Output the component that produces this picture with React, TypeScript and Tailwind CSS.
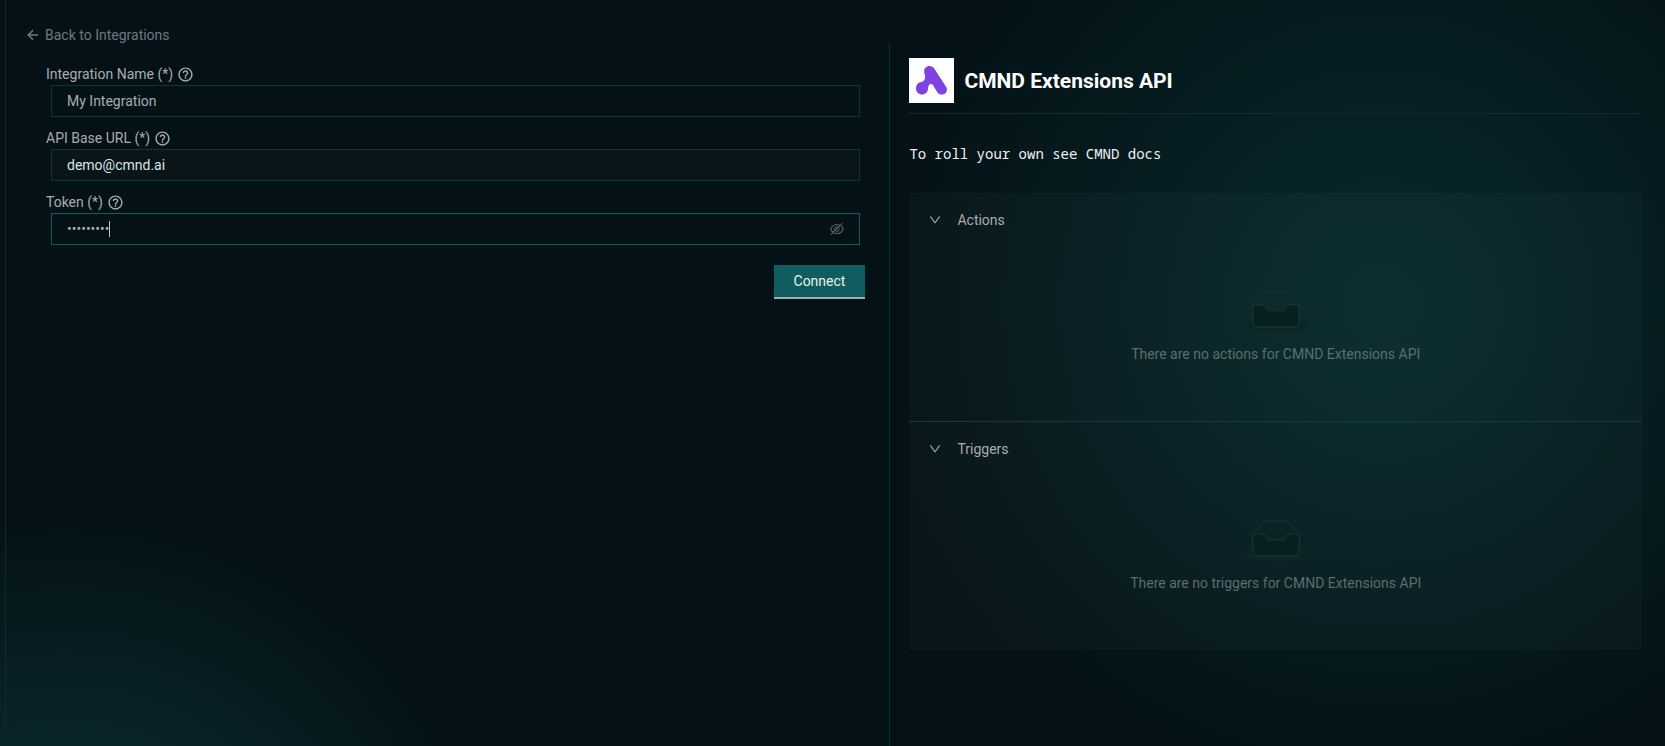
import { useState, type ReactNode } from "react";
import { AiOutlineDown, AiOutlineEyeInvisible } from "react-icons/ai";
import { MdHelpOutline } from "react-icons/md";

type FieldProps = {
  id: string;
  label: string;
  children: ReactNode;
};

const inputClass =
  "block h-8 w-full border px-[15px] text-sm outline-none caret-transparent";

function Field({ id, label, children }: FieldProps) {
  return (
    <div className="mb-[10px]">
      <div className="flex h-[22px] items-center gap-1 text-sm text-[#a9adae]">
        <label htmlFor={id}>{label}</label>
        <MdHelpOutline className="size-[17px]" />
      </div>
      <div className="relative mx-[5px]">{children}</div>
    </div>
  );
}

function BackArrow() {
  return (
    <svg viewBox="0 0 14 14" className="size-[14px]" fill="none" stroke="currentColor" strokeWidth="1.6" aria-hidden="true">
      <path d="M12 7H2.800M7 2.300L2.300 7 7 11.700" />
    </svg>
  );
}

function Logo() {
  return (
    <svg viewBox="0 0 45 45" className="size-[45px] shrink-0 bg-white" aria-hidden="true">
      <path
        d="M20.500 8c-3.300 0-5.600 2.600-5.400 5.600.1 2.100.9 3.200 1 5 .1 3.300-1.500 5.400-4.700 5.700C8.700 24.700 7 27.400 7 30.500 7 34 9.700 36.500 13 36.500c3.600 0 5.700-2.300 6-5.500.3-3.100.9-5 2.900-5 1.300 0 2 .9 2.700 2.200l3.600 5.700c1.200 1.800 2.700 2.600 4.600 2.600 4 0 6.500-4 4.400-7.600L25.400 10.700C24.200 8.900 22.600 8 20.500 8z"
        fill="#8142e3"
      />
    </svg>
  );
}

function EmptyTray() {
  return (
    <svg width="64" height="41" viewBox="0 0 64 41" aria-hidden="true">
      <g transform="translate(0 1)" fill="none" fillRule="evenodd">
        <ellipse fill="#0b2627" cx="32" cy="33" rx="32" ry="7" />
        <g fillRule="nonzero" stroke="#1f3537">
          <path d="M55 12.760L44.854 1.258C44.367.474 43.656 0 42.907 0H21.093c-.749 0-1.460.474-1.947 1.257L9 12.761V22h46v-9.240z" />
          <path
            d="M41.613 15.931c0-1.605.994-2.930 2.227-2.931H55v18.137C55 33.260 53.680 35 52.050 35h-40.100C10.320 35 9 33.259 9 31.137V13h11.160c1.233 0 2.227 1.323 2.227 2.928v.022c0 1.605 1.005 2.901 2.237 2.901h14.752c1.232 0 2.237-1.308 2.237-2.913v-.007z"
            fill="#071f20"
          />
        </g>
      </g>
    </svg>
  );
}

function Section({ title, empty }: { title: string; empty: string }) {
  const [open, setOpen] = useState(true);

  return (
    <section className="border-b border-[#113b3d] pb-14 last:border-b-0">
      <button
        type="button"
        aria-expanded={open}
        onClick={() => setOpen(!open)}
        className="flex h-[54px] w-full items-center gap-[15px] px-[19px] text-left text-sm text-[#a9adae]"
      >
        <AiOutlineDown className="size-[14px]" />
        {title}
      </button>
      {open && (
        <div className="flex flex-col items-center pt-11">
          <EmptyTray />
          <p className="mt-[11px] text-sm leading-[22px] text-[#5c6d6f]">{empty}</p>
        </div>
      )}
    </section>
  );
}

export default function App() {
  const [name, setName] = useState("My Integration");
  const [baseUrl, setBaseUrl] = useState("demo@cmnd.ai");
  const [token, setToken] = useState("cmndtoken");
  const [showToken, setShowToken] = useState(false);

  return (
    <div className="min-h-screen bg-[#041116] bg-[radial-gradient(circle_510px_at_83%_305px,#082a2c,#04111600),radial-gradient(circle_450px_at_65px_calc(100%+205px),#0e3638,#04111600)] pl-[5px] font-['Roboto',sans-serif]">
      <div className="flex min-h-screen border-l border-[#10292c]">
        <main className="min-w-0 flex-1 pt-6 pl-5">
          <a href="#integrations" className="flex h-[22px] w-fit items-center gap-[5px] text-sm text-[#6c7a7e]">
            <BackArrow />
            Back to Integrations
          </a>

          <form className="mt-[17px] mr-6 ml-5" onSubmit={(e) => e.preventDefault()}>
            <Field id="name" label="Integration Name (*)">
              <input
                id="name"
                value={name}
                onChange={(e) => setName(e.target.value)}
                className={`${inputClass} border-[#0c3639] bg-[#041217] text-[#a9adae]`}
              />
            </Field>
            <Field id="base-url" label="API Base URL (*)">
              <input
                id="base-url"
                value={baseUrl}
                onChange={(e) => setBaseUrl(e.target.value)}
                className={`${inputClass} border-[#0c3639] bg-[#0a151a] text-[#d7e6ea]`}
              />
            </Field>
            <Field id="token" label="Token (*)">
              <input
                id="token"
                type={showToken ? "text" : "password"}
                value={token}
                onChange={(e) => setToken(e.target.value)}
                className={`${inputClass} border-[#115c5d] bg-[#041116] text-[#a9adae]`}
              />
              {!showToken && (
                <span
                  className="absolute top-2 h-4 w-px bg-[#c3c7c8]"
                  style={{ left: Math.round(16 + token.length * 4.720) }}
                />
              )}
              <button
                type="button"
                aria-label="Toggle token visibility"
                onClick={() => setShowToken(!showToken)}
                className="absolute top-2 right-[15px] text-[#5b6163]"
              >
                <AiOutlineEyeInvisible className="size-4" />
              </button>
            </Field>
            <div className="mt-5 flex justify-end">
              <button
                type="submit"
                className="h-[34px] border-b-2 border-[#9eb0aa] bg-[#115c5e] px-5 text-sm text-[#e8f1f1]"
              >
                Connect
              </button>
            </div>
          </form>
        </main>

        <aside className="mt-[43px] w-[46.75%] shrink-0 border-l border-[#0d3033] pt-[15px] pr-[23px] pl-[19px]">
          <header className="flex items-center gap-[10px] border-b border-[#132b2e] pb-[10px]">
            <Logo />
            <h1 className="text-[21px] leading-7 font-bold text-white">CMND Extensions API</h1>
          </header>
          <p className="mt-[29px] font-['Noto_Sans_Mono','DejaVu_Sans_Mono',monospace] text-sm leading-[22px] text-[#eef1f1]">
            To roll your own see CMND docs
          </p>
          <div className="mt-7 bg-[#ffffff06]">
            <Section title="Actions" empty="There are no actions for CMND Extensions API" />
            <Section title="Triggers" empty="There are no triggers for CMND Extensions API" />
          </div>
        </aside>
      </div>
    </div>
  );
}
